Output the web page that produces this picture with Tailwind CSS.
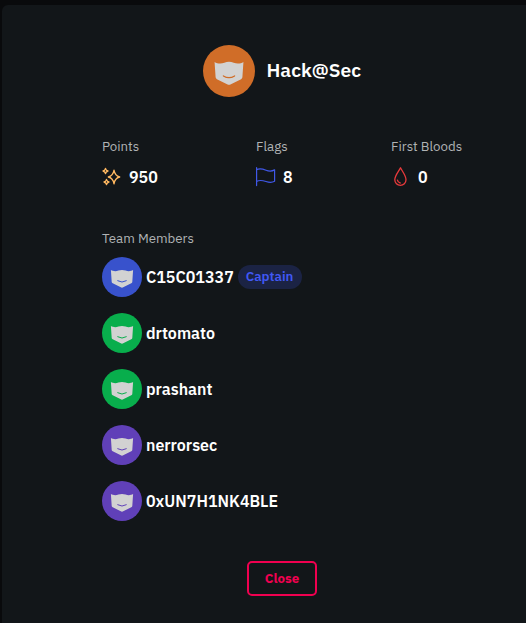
<!DOCTYPE html>
<html lang="en">
<head>
    <meta charset="UTF-8">
    <meta name="viewport" content="width=device-width, initial-scale=1.0">
    <title>Hack@Sec</title>
    <script src="https://cdn.jsdelivr.net/npm/@tailwindcss/browser@4"></script>
</head>
<body class="bg-[#090a0c] h-screen overflow-hidden pt-[5px] pl-0.5 font-['IBM_Plex_Sans','Noto_Sans',sans-serif] text-white">
    <svg class="hidden">
        <symbol id="mask" viewBox="0 0 40 40">
            <path fill="#d2d2d2" d="M8.9 13C11 14.4 14.2 14.4 16.4 13.6Q20 12.2 23.6 13.6C25.8 14.4 29 14.4 31.1 13L30.3 24.9Q30.2 25.9 29.3 26.3L20.7 30.5Q20 30.8 19.3 30.5L10.7 26.3Q9.8 25.9 9.7 24.9Z"/>
            <path fill="none" stroke="currentColor" stroke-width="1" stroke-linecap="round" d="M15.7 23.8Q20 26.5 24.3 23.8"/>
        </symbol>
    </svg>
    <div class="h-full rounded-tl-md bg-[#121619] pl-[100px] pt-10">
        <div class="w-[360px]">
            <!-- Team header -->
            <div class="flex items-center justify-center gap-3">
                <svg class="size-[52px] rounded-full bg-[#d06d28] text-[#d06d28]"><use href="#mask"/></svg>
                <h1 class="mb-0.5 w-[95px] whitespace-nowrap text-[19.3px] leading-6 font-semibold">Hack@Sec</h1>
            </div>

            <!-- Stats -->
            <div class="mt-10 flex justify-between">
                <div class="w-14">
                    <p class="text-[13.3px] leading-[18px] text-[#b0b3b5]">Points</p>
                    <div class="mt-3 flex h-5 items-center gap-[7px]">
                        <svg class="size-5 shrink-0" viewBox="0 0 20 20" fill="none" stroke="#ffb861" stroke-width="1.3" stroke-linejoin="round">
                            <path d="M12 3.2Q13 9 17.7 10Q13 11 12 16.8Q11 11 6.3 10Q11 9 12 3.2Z"/>
                            <path d="M3.5 1.3Q4 3.5 6 4Q4 4.5 3.5 6.7Q3 4.5 1 4Q3 3.5 3.5 1.3Z"/>
                            <path d="M4.5 12.3Q5 14.5 7 15Q5 15.5 4.5 17.7Q4 15.5 2 15Q4 14.5 4.5 12.3Z"/>
                        </svg>
                        <span class="text-base font-semibold">950</span>
                    </div>
                </div>
                <div class="w-[37px]">
                    <p class="whitespace-nowrap text-[13.3px] leading-[18px] text-[#b0b3b5]">Flags</p>
                    <div class="mt-3 flex h-5 items-center gap-[7px]">
                        <svg class="size-5 shrink-0" viewBox="0 0 20 20" fill="none" stroke="#4058e8" stroke-width="1.2" stroke-linecap="round" stroke-linejoin="round">
                            <path d="M.6 .7V18.6M.6 2.7C4 .8 7 2 10 3.2S15.5 4.6 18.6 2.9V14.3C15.5 16 13 15.5 10 14.5S4 12.5 .6 14.4"/>
                        </svg>
                        <span class="text-base font-semibold">8</span>
                    </div>
                </div>
                <div class="w-[71px]">
                    <p class="whitespace-nowrap text-[13.3px] leading-[18px] text-[#b0b3b5]">First Bloods</p>
                    <div class="mt-3 flex h-5 items-center gap-[7px]">
                        <svg class="size-5 shrink-0" viewBox="0 0 20 20" fill="none" stroke="#e93a3c" stroke-width="1.3" stroke-linecap="round" stroke-linejoin="round">
                            <path d="M9.5 .8C11 4 15 8.5 15 12.8A5.6 5.6 0 0 1 3.8 12.8C3.8 8.5 8 4 9.5 .8Z"/>
                            <path d="M6.4 13.2Q6.9 15.6 9.2 16"/>
                        </svg>
                        <span class="text-base font-semibold">0</span>
                    </div>
                </div>
            </div>

            <!-- Members -->
            <p class="mt-[42px] text-[13.3px] leading-[18px] text-[#b0b3b5]">Team Members</p>
            <ul class="mt-2.5 space-y-4 text-base font-semibold">
                <li class="flex items-center gap-1">
                    <svg class="size-10 rounded-full bg-[#3852cc] text-[#3852cc]"><use href="#mask"/></svg>
                    <span class="w-[88px] whitespace-nowrap">C15C01337</span>
                    <span class="flex h-6 w-16 items-center justify-center rounded-full bg-[#1b2344] pr-px text-[13.3px] text-[#4058f5]">Captain</span>
                </li>
                <li class="flex items-center gap-1">
                    <svg class="size-10 rounded-full bg-[#08ae4c] text-[#08ae4c]"><use href="#mask"/></svg>
                    <span>drtomato</span>
                </li>
                <li class="flex items-center gap-1">
                    <svg class="size-10 rounded-full bg-[#08ae4c] text-[#08ae4c]"><use href="#mask"/></svg>
                    <span>prashant</span>
                </li>
                <li class="flex items-center gap-1">
                    <svg class="size-10 rounded-full bg-[#6040b8] text-[#6040b8]"><use href="#mask"/></svg>
                    <span>nerrorsec</span>
                </li>
                <li class="flex items-center gap-1">
                    <svg class="size-10 rounded-full bg-[#6040b8] text-[#6040b8]"><use href="#mask"/></svg>
                    <span>0xUN7H1NK4BLE</span>
                </li>
            </ul>

            <button class="mx-auto mt-10 block h-[35px] w-[70px] rounded-[5px] border-2 border-[#f00050] text-[13.3px] font-bold text-[#f00050]">Close</button>
        </div>
    </div>
</body>
</html>
